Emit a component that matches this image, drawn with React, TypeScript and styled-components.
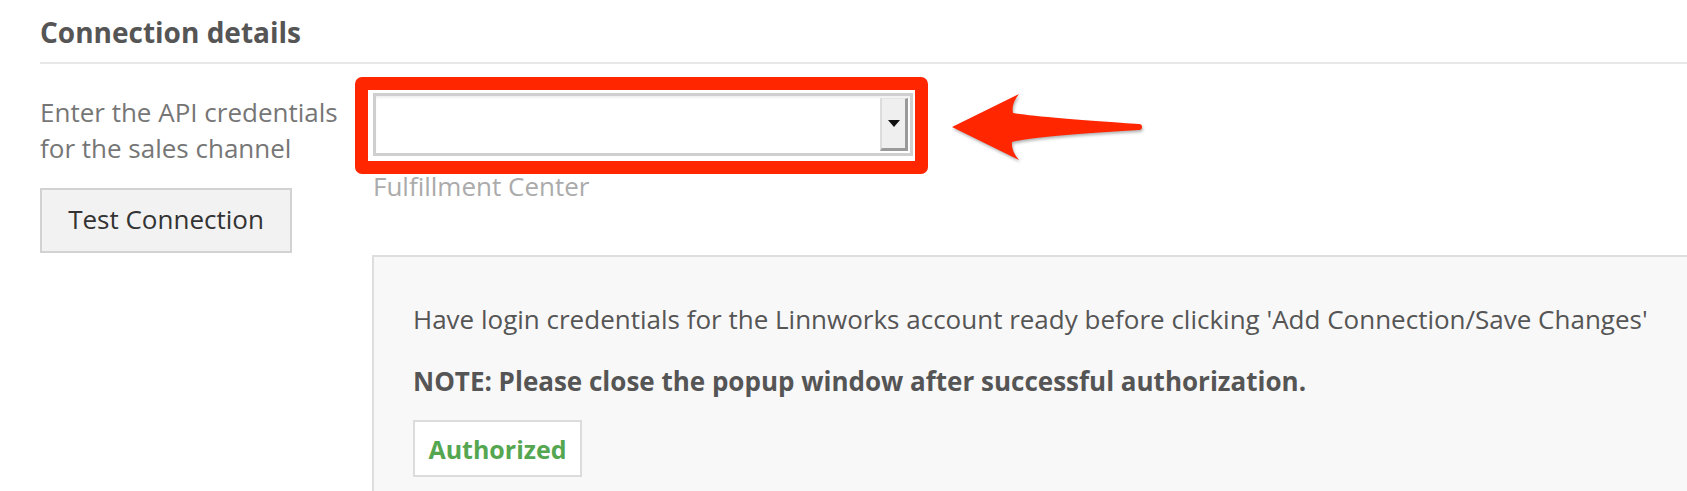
import React from 'react';
import styled, { createGlobalStyle } from 'styled-components';

const GlobalStyle = createGlobalStyle`
  *, *::before, *::after {
    box-sizing: border-box;
  }

  html, body {
    margin: 0;
    padding: 0;
    background: #fff;
    overflow: hidden;
    font-family: 'Open Sans', 'Liberation Sans', sans-serif;
  }
`;

const Page = styled.div`
  padding: 13px 0 0 40px;
  height: 491px;
`;

const Heading = styled.h2`
  margin: 0;
  font-size: 28px;
  line-height: 38px;
  font-weight: 700;
  color: #555;
  padding-bottom: 11px;
  border-bottom: 2px solid #e8e8e8;
`;

const Row = styled.div`
  display: flex;
  margin-top: 30px;
`;

const LabelCol = styled.div`
  width: 332px;
  flex-shrink: 0;
  display: flex;
  flex-direction: column;
  align-items: flex-start;
`;

const Label = styled.div`
  width: 300px;
  font-size: 26px;
  line-height: 36px;
  color: #767676;
`;

const Button = styled.button`
  margin-top: 22px;
  width: 252px;
  height: 65px;
  border: 2px solid #d2d2d2;
  background: #f2f2f2;
  color: #333;
  font-family: inherit;
  font-size: 26px;
  line-height: 36px;
  padding: 0 0 4px;
`;

const FieldCol = styled.div`
  flex: 1;
  display: flex;
  flex-direction: column;
`;

const FieldWrap = styled.div`
  position: relative;
  width: 540px;
  margin-left: 1px;
  margin-top: -1px;
`;

const SelectBox = styled.div`
  height: 63px;
  border: 3px solid #cfcfcf;
  background: #fff;
  box-shadow: inset 0 2px 2px rgba(0, 0, 0, 0.06);
  display: flex;
  justify-content: flex-end;
  padding: 2px;
`;

const DropButton = styled.div`
  width: 28px;
  background: #efefef;
  border-style: solid;
  border-width: 1px 3px 3px 2px;
  border-color: #e4e4e4 #9a9a9a #9a9a9a #dcdcdc;
  display: flex;
  align-items: center;
  justify-content: center;
  padding-left: 1px;

  &::after {
    content: '';
    border-left: 6px solid transparent;
    border-right: 6px solid transparent;
    border-top: 7px solid #111;
  }
`;

const RedFrame = styled.div`
  position: absolute;
  left: -18px;
  top: -16px;
  right: -15px;
  bottom: -18px;
  border: 13px solid #ff2600;
  border-radius: 7px;
  pointer-events: none;
`;

const Arrow = styled.svg`
  position: absolute;
  left: 567px;
  top: -13px;
  filter: drop-shadow(1px 2px 1.5px rgba(0, 0, 0, 0.3));
`;

const Hint = styled.div`
  margin-top: 12px;
  padding-left: 1px;
  font-size: 26px;
  line-height: 36px;
  color: #ababab;
`;

const Panel = styled.div`
  margin-top: 51px;
  background: #f8f8f8;
  border: 2px solid #dedede;
  border-right: none;
  padding: 44px 0 60px 39px;
  display: flex;
  flex-direction: column;
  align-items: flex-start;
`;

const Text = styled.p<{ $bold?: boolean; $gap?: number }>`
  margin: ${(p) => p.$gap ?? 0}px 0 0;
  font-size: 26px;
  line-height: 36px;
  color: #555;
  font-weight: ${(p) => (p.$bold ? 700 : 400)};
  white-space: nowrap;
`;

const AuthButton = styled.div`
  margin-top: 21px;
  width: 169px;
  height: 57px;
  background: #fff;
  border: 2px solid #dcdcdc;
  display: flex;
  align-items: center;
  justify-content: center;
  font-size: 25px;
  font-weight: 700;
  color: #55a651;
`;

export default function App() {
  return (
    <Page>
      <GlobalStyle />
      <Heading>Connection details</Heading>
      <Row>
        <LabelCol>
          <Label>Enter the API credentials for the sales channel</Label>
          <Button>Test Connection</Button>
        </LabelCol>
        <FieldCol>
          <FieldWrap>
            <SelectBox>
              <DropButton />
            </SelectBox>
            <RedFrame />
            <Arrow width="210" height="95" viewBox="0 0 210 95">
              <path
                d="M12 47 L79 14 Q71 24 73 33 Q95 37 199 44 A3 3 0 0 1 199 50 Q95 56 72 62 Q71 71 79 80 Z"
                fill="#ff2600"
              />
            </Arrow>
          </FieldWrap>
          <Hint>Fulfillment Center</Hint>
          <Panel>
            <Text>
              Have login credentials for the Linnworks account ready before clicking 'Add Connection/Save Changes'
            </Text>
            <Text $bold $gap={26}>
              NOTE: Please close the popup window after successful authorization.
            </Text>
            <AuthButton>Authorized</AuthButton>
          </Panel>
        </FieldCol>
      </Row>
    </Page>
  );
}
